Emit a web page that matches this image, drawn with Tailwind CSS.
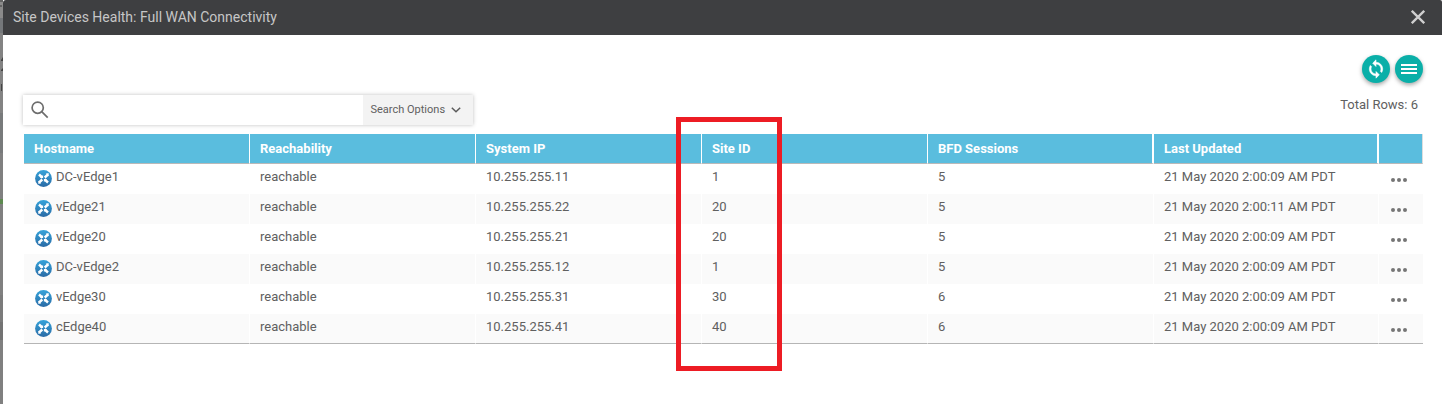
<!DOCTYPE html>
<html lang="en">
<head>
<meta charset="utf-8">
<title>Site Devices Health</title>
<script src="https://cdn.jsdelivr.net/npm/@tailwindcss/browser@4"></script>
</head>
<body class="bg-white overflow-hidden font-['Roboto',sans-serif] text-[13px] text-[#606060]">
<svg class="absolute" width="0" height="0">
  <defs>
    <linearGradient id="blue" x1="0" y1="0" x2="0" y2="1"><stop offset="0" stop-color="#35a3da"/><stop offset="1" stop-color="#2a6ba6"/></linearGradient>
    <symbol id="router" viewBox="0 0 17 17">
      <circle cx="8.5" cy="8.5" r="8.4" fill="url(#blue)"/>
      <path d="M4 4.500 7.300 7.500M13 4.500 9.700 7.500M4 12.500 7.300 9.500M13 12.500 9.700 9.500" stroke="#fff" stroke-width="2.400"/>
      <path fill="#fff" d="M4.900 8.100H8.100V5zM8.900 8.900h3.200L8.900 12zM10.800 3.600l3-.3-.3 3zM6.200 13.400l-3 .3.3-3z"/>
    </symbol>
    <symbol id="dots" viewBox="0 0 16 4"><g fill="#757575"><circle cx="2" cy="2" r="2"/><circle cx="8" cy="2" r="2"/><circle cx="14" cy="2" r="2"/></g></symbol>
  </defs>
</svg>
<div class="relative flex w-[1442px] h-[404px] overflow-hidden">
  <div class="w-[3px] shrink-0 flex flex-col overflow-hidden bg-[#808080]">
    <div class="h-[18px] bg-[#8a8a8a] overflow-hidden"><svg class="block" width="3" height="18"><path d="M0 1h3M0 6h2" stroke="#555" stroke-width="1.5"/></svg></div>
    <div class="h-[15px] bg-[#74777a]"></div>
    <div class="h-[80px] bg-[#838383]"><svg class="block" width="3" height="80" fill="#444"><path d="M1 27 3 24v4H1zM1 37l2-2v3H1zM1 51h1v7H1z"/></svg></div>
    <div class="h-[40px] bg-[#787a7b]"></div>
    <div class="h-[46px] bg-[#808080]"></div>
    <div class="h-[5px] bg-[#5d8a50]"></div>
    <div class="h-[91px] bg-[#808080]"></div>
    <div class="h-[27px] bg-[#7b7b7b]"></div>
    <div class="h-[18px] bg-[#737373]"></div>
  </div>
  <div class="flex-1 min-w-0 bg-white">
    <header class="flex h-[35px] items-center justify-between bg-[#3e3f41] rounded-tl-[3px] rounded-tr-[2px] pl-[10px] pr-[17px] text-[#c6c6c6]">
      <h1 class="text-[14px] leading-5 whitespace-nowrap -mt-px"><span>Site Devices Health: Full WAN Connectivity</span></h1>
      <svg class="-mt-px" width="14" height="14" viewBox="0 0 14 14" stroke="#cfcfcf" stroke-width="2.3"><path d="M.8.8 13.2 13.2M13.2.8.8 13.2"/></svg>
    </header>
    <main class="pl-[20px] pr-[19px]">
      <div class="flex justify-end gap-[5px] pt-5">
        <button class="flex size-7 items-center justify-center rounded-full bg-[#0aafa8] shadow-[0_2px_4px_rgba(0,0,0,0.35)]"><svg width="20" height="20" viewBox="0 0 24 24" fill="#fff" stroke="#fff" stroke-width=".7"><path d="M12 6v3l4-4-4-4v3c-4.42 0-8 3.580-8 8 0 1.570.46 3.030 1.240 4.260L6.700 14.800c-.45-.83-.7-1.790-.7-2.800 0-3.310 2.690-6 6-6zm6.760 1.740L17.300 9.200c.44.84.7 1.790.7 2.800 0 3.310-2.690 6-6 6v-3l-4 4 4 4v-3c4.420 0 8-3.580 8-8 0-1.570-.46-3.030-1.240-4.260z" transform="matrix(-1 0 0 1 24 0)"/></svg></button>
        <button class="flex size-7 items-center justify-center rounded-full bg-[#0aafa8] shadow-[0_2px_4px_rgba(0,0,0,0.35)]"><svg width="16" height="10" viewBox="0 0 16 10" fill="#fff"><path d="M0 0h16v2H0zM0 4h16v2H0zM0 8h16v2H0z"/></svg></button>
      </div>
      <div class="flex h-[51px] justify-between pt-3">
        <div class="flex h-[30px] w-[450px] bg-white shadow-[0_0_4px_rgba(0,0,0,0.25)]">
          <div class="flex flex-1 items-center pl-2"><svg width="18" height="18" viewBox="0 0 18 18" fill="none" stroke="#6d6d6d" stroke-width="1.700"><circle cx="6.7" cy="6.700" r="5.600"/><path d="m10.700 10.700 6 6"/></svg></div>
          <div class="flex w-[110px] items-center bg-[#f3f3f3] pl-[7.5px] text-[11px]"><span class="whitespace-nowrap">Search Options</span><svg class="ml-[6px]" width="10" height="6" viewBox="0 0 10 6" fill="none" stroke="#5c5c5c" stroke-width="1.500"><path d="M.8.700 5 4.800 9.200.700"/></svg></div>
        </div>
        <div class="pr-[5px] leading-5"><span>Total Rows: 6</span></div>
      </div>
      <table class="ml-px w-[1399px] table-fixed border-separate border-spacing-0 text-left">
        <colgroup><col class="w-[226px]"><col class="w-[226px]"><col class="w-[226px]"><col class="w-[226px]"><col class="w-[226px]"><col class="w-[225px]"><col class="w-[44px]"></colgroup>
        <thead>
          <tr class="h-[30px] text-white *:bg-[#5abdde] *:bg-clip-padding *:border-b *:border-b-[#b9b9b9] *:border-r *:border-r-white *:p-0 *:pl-[10px] *:font-bold">
            <th>Hostname</th><th>Reachability</th><th>System IP</th><th>Site ID</th><th class="border-r-2!">BFD Sessions</th><th class="border-r-2!">Last Updated</th><th class="border-r-[#dddddd]!"></th>
          </tr>
        </thead>
        <tbody id="rows"></tbody>
      </table>
    </main>
  </div>
  <div class="absolute left-[676px] top-[117px] h-[254px] w-[106px] border-5 border-[#ed1c24]"></div>
</div>
<script>
const data = [
  ['DC-vEdge1','10.255.255.11','1','5','21 May 2020 2:00:09 AM PDT'],
  ['vEdge21','10.255.255.22','20','5','21 May 2020 2:00:11 AM PDT'],
  ['vEdge20','10.255.255.21','20','5','21 May 2020 2:00:09 AM PDT'],
  ['DC-vEdge2','10.255.255.12','1','5','21 May 2020 2:00:09 AM PDT'],
  ['vEdge30','10.255.255.31','30','6','21 May 2020 2:00:09 AM PDT'],
  ['cEdge40','10.255.255.41','40','6','21 May 2020 2:00:09 AM PDT']
];
document.getElementById('rows').innerHTML = data.map(([h, ip, site, bfd, t]) => `
  <tr class="h-[30px] even:bg-[#fafafa] *:border-r *:border-r-white *:p-0 *:pb-1 *:pl-[10px] last:*:border-b last:*:border-b-[#b5b5b5] last:*:pb-[3px] whitespace-nowrap">
    <td><div class="flex items-center h-5"><svg class="ml-px mr-1 mt-[2px]" width="17" height="17"><use href="#router"/></svg><span>${h}</span></div></td>
    <td>reachable</td><td>${ip}</td><td>${site}</td><td>${bfd}</td><td>${t}</td>
    <td class="border-r-0!"><svg class="ml-[2px] mt-[5px] block" width="16" height="4"><use href="#dots"/></svg></td>
  </tr>`).join('');
</script>
</body>
</html>
